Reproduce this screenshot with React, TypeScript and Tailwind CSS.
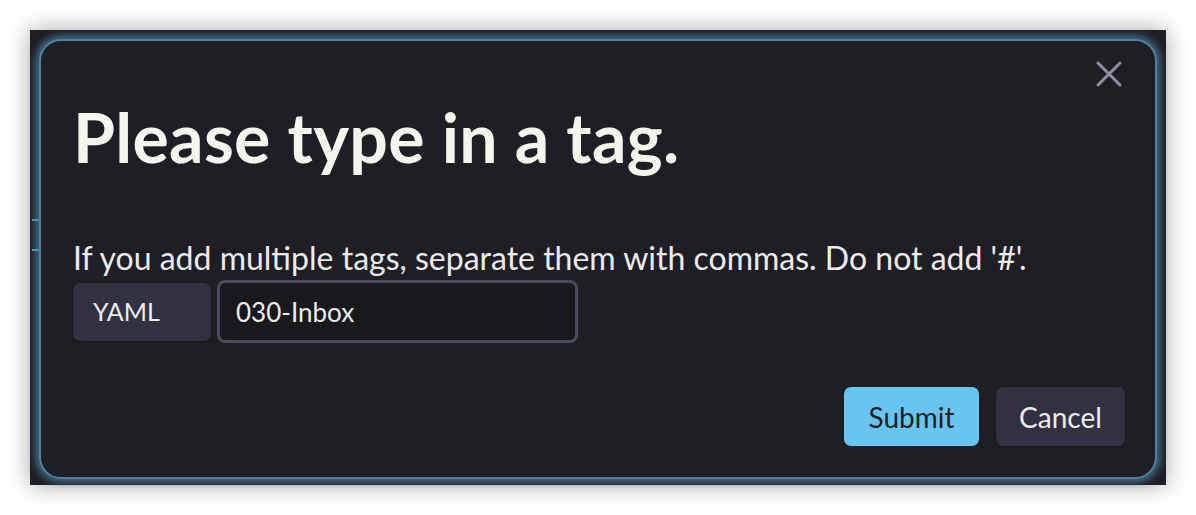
import { X } from "lucide-react";

export default function App() {
    return (
        <div className="w-full h-[515px] bg-white pt-[30px] pl-[30px] font-['Lato','Liberation_Sans',sans-serif]">
            <div className="relative w-[1136px] h-[455px] bg-[#1f1e24] pt-[9px] px-[9px] pb-[6px] shadow-[0_0_22px_rgba(0,0,0,0.35)]">
                {/* bits of the page behind the modal */}
                <div className="absolute left-[2px] top-[189px] w-[8px] h-[2px] bg-[#5b9fc6]" />
                <div className="absolute left-[2px] top-[219px] w-[8px] h-[2px] bg-[#5b9fc6]" />

                <div className="relative h-full rounded-[22px] border-2 border-[#4f809c] bg-[#1f1e24] shadow-[0_0_7px_4px_rgba(72,125,158,0.75)] pl-8 pr-[30px] pt-[56px] pb-[31px] flex flex-col">
                    <button className="absolute right-[24px] top-[11px] text-[#8f8fa6]">
                        <X className="w-[44px] h-[44px]" strokeWidth={1.6} />
                    </button>

                    <h1 className="text-[68px] leading-[80px] font-bold tracking-[0.3px] text-[#f5f5ee]">Please type in a tag.</h1>

                    <p className="mt-[61px] text-[32px] leading-[40px] text-[#ececec]">
                        If you add multiple tags, separate them with commas. Do not add '#'.
                    </p>

                    <div className="mt-[2px] flex items-center gap-[6px]">
                        <div className="w-[138px] h-[58px] rounded-[7px] bg-[#313142] shadow-[0_1px_2px_rgba(0,0,0,0.4)] flex items-center pl-[20px] text-[25px] text-[#ececec]">
                            YAML
                        </div>
                        <input
                            className="w-[361px] h-[63px] rounded-[8px] border-[3px] border-[#484a60] bg-[#19181d] pl-[16px] text-[26px] text-[#ececec] outline-none"
                            defaultValue="030-Inbox"
                        />
                    </div>

                    <div className="mt-auto flex justify-end gap-[17px]">
                        <button className="w-[135px] h-[59px] rounded-[7px] bg-[#66c6f1] text-[28px] text-[#1e1e24]">Submit</button>
                        <button className="w-[129px] h-[59px] rounded-[7px] bg-[#313142] shadow-[0_1px_2px_rgba(0,0,0,0.4)] text-[28px] text-[#ececec]">
                            Cancel
                        </button>
                    </div>
                </div>
            </div>
        </div>
    );
}
